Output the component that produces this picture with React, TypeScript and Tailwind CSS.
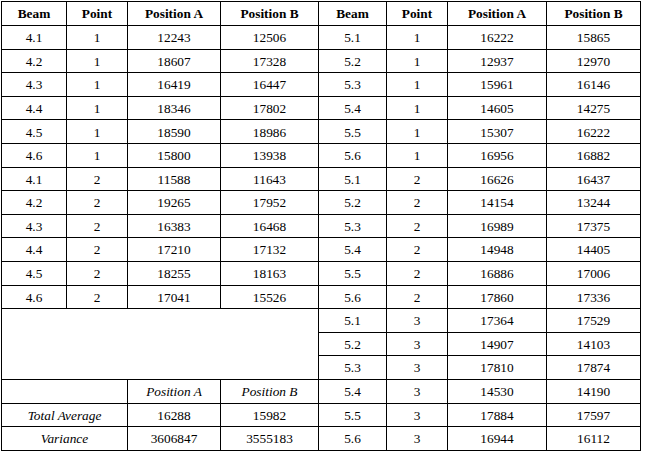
const left = [
  ["4.1", "1", "12243", "12506"],
  ["4.2", "1", "18607", "17328"],
  ["4.3", "1", "16419", "16447"],
  ["4.4", "1", "18346", "17802"],
  ["4.5", "1", "18590", "18986"],
  ["4.6", "1", "15800", "13938"],
  ["4.1", "2", "11588", "11643"],
  ["4.2", "2", "19265", "17952"],
  ["4.3", "2", "16383", "16468"],
  ["4.4", "2", "17210", "17132"],
  ["4.5", "2", "18255", "18163"],
  ["4.6", "2", "17041", "15526"],
];

const right = [
  ["5.1", "1", "16222", "15865"],
  ["5.2", "1", "12937", "12970"],
  ["5.3", "1", "15961", "16146"],
  ["5.4", "1", "14605", "14275"],
  ["5.5", "1", "15307", "16222"],
  ["5.6", "1", "16956", "16882"],
  ["5.1", "2", "16626", "16437"],
  ["5.2", "2", "14154", "13244"],
  ["5.3", "2", "16989", "17375"],
  ["5.4", "2", "14948", "14405"],
  ["5.5", "2", "16886", "17006"],
  ["5.6", "2", "17860", "17336"],
  ["5.1", "3", "17364", "17529"],
  ["5.2", "3", "14907", "14103"],
  ["5.3", "3", "17810", "17874"],
  ["5.4", "3", "14530", "14190"],
  ["5.5", "3", "17884", "17597"],
  ["5.6", "3", "16944", "16112"],
];

const widths = ["w-[65px]", "w-[61px]", "w-[93px]", "w-[98px]", "w-[68px]", "w-[61px]", "w-[99px]", "w-[94px]"];
const headers = ["Beam", "Point", "Position A", "Position B", "Beam", "Point", "Position A", "Position B"];

const td = "border border-black text-center align-middle p-0 pt-px";

function Cells({ row }: { row: string[] }) {
  return (
    <>
      {row.map((v, i) => (
        <td key={i} className={td}>
          {v}
        </td>
      ))}
    </>
  );
}

export default function App() {
  return (
    <div className="w-[645px] h-[455px] bg-white pl-px pt-px font-['Liberation_Serif','Times_New_Roman',serif]">
      <table className="border-collapse table-fixed text-[13.33px] leading-none text-black">
        <thead>
          <tr className="h-[24px]">
            {headers.map((h, i) => (
              <th key={i} className={`${td} ${widths[i]} font-bold`}>
                {h}
              </th>
            ))}
          </tr>
        </thead>
        <tbody>
          {right.map((r, i) => (
            <tr key={i} className="h-[23.6px]">
              {i < 12 && <Cells row={left[i]} />}
              {i === 12 && <td className={td} colSpan={4} rowSpan={3}></td>}
              {i === 15 && (
                <>
                  <td className={td} colSpan={2}></td>
                  <td className={`${td} italic`}>Position A</td>
                  <td className={`${td} italic`}>Position B</td>
                </>
              )}
              {i === 16 && (
                <>
                  <td className={`${td} italic`} colSpan={2}>Total Average</td>
                  <td className={td}>16288</td>
                  <td className={td}>15982</td>
                </>
              )}
              {i === 17 && (
                <>
                  <td className={`${td} italic`} colSpan={2}>Variance</td>
                  <td className={td}>3606847</td>
                  <td className={td}>3555183</td>
                </>
              )}
              <Cells row={r} />
            </tr>
          ))}
        </tbody>
      </table>
    </div>
  );
}
